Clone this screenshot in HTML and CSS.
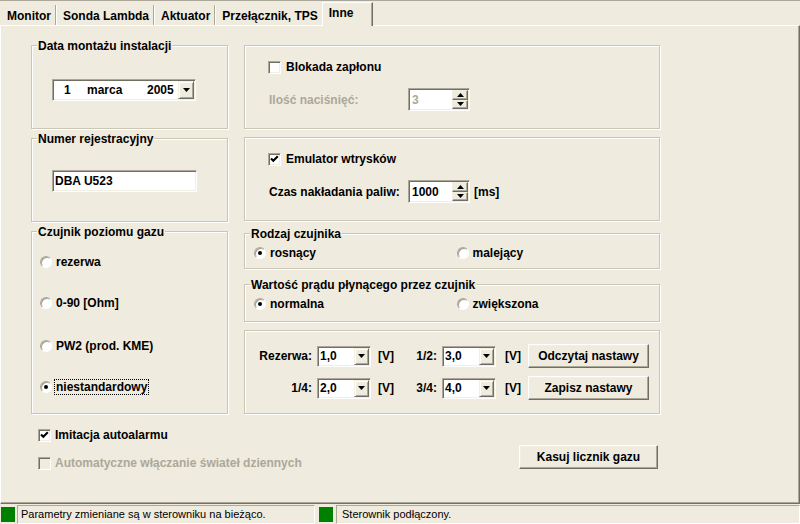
FILE: index.html
```html
<!DOCTYPE html>
<html lang="pl">
<head>
<meta charset="utf-8">
<title>Inne</title>
<link rel="stylesheet" href="styles.css">
</head>
<body>
<div class="tabs">
  <div class="tab">Monitor</div>
  <div class="tab">Sonda Lambda</div>
  <div class="tab">Aktuator</div>
  <div class="tab prev">Przełącznik, TPS</div>
  <div class="tab active">Inne</div>
</div>
<div class="panel">
  <div class="cols">
    <div class="col col-left">
      <div class="group g-date">
        <div class="cap">Data montażu instalacji</div>
        <div class="field date">
          <span class="d-day">1</span><span class="d-month">marca</span><span class="d-year">2005</span>
          <span class="ddbtn"><svg width="7" height="4" viewBox="0 0 7 4"><polygon points="0,0 7,0 3.5,4" fill="#000"/></svg></span>
        </div>
      </div>
      <div class="group g-reg">
        <div class="cap">Numer rejestracyjny</div>
        <div class="field text-in">DBA U523</div>
      </div>
      <div class="group g-gas">
        <div class="cap">Czujnik poziomu gazu</div>
        <div class="gopt go1"><span class="radio"></span><span class="lbl">rezerwa</span></div>
        <div class="gopt go2"><span class="radio"></span><span class="lbl">0-90 [Ohm]</span></div>
        <div class="gopt go3"><span class="radio"></span><span class="lbl">PW2 (prod. KME)</span></div>
        <div class="gopt go4"><span class="radio on"></span><span class="lbl focus">niestandardowy</span></div>
      </div>
    </div>
    <div class="col col-right">
      <div class="group b1">
        <div class="chkrow"><span class="check"></span><span class="lbl">Blokada zapłonu</span></div>
        <div class="spinrow">
          <span class="slbl dis">Ilość naciśnięć:</span>
          <div class="field spin"><span class="val dis">3</span>
            <span class="spinbtns">
              <span class="sb"><svg width="7" height="4" viewBox="0 0 7 4"><polygon points="0,4 7,4 3.5,0" fill="#000"/></svg></span>
              <span class="sb"><svg width="7" height="4" viewBox="0 0 7 4"><polygon points="0,0 7,0 3.5,4" fill="#000"/></svg></span>
            </span>
          </div>
        </div>
      </div>
      <div class="group b2">
        <div class="chkrow"><span class="check on"><svg width="11" height="11" viewBox="1 1 11 11"><polyline points="3,5.5 5.3,7.8 9.8,3.3" fill="none" stroke="#000" stroke-width="2.1"/></svg></span><span class="lbl">Emulator wtrysków</span></div>
        <div class="spinrow">
          <span class="slbl">Czas nakładania paliw:</span>
          <div class="field spin"><span class="val">1000</span>
            <span class="spinbtns">
              <span class="sb"><svg width="7" height="4" viewBox="0 0 7 4"><polygon points="0,4 7,4 3.5,0" fill="#000"/></svg></span>
              <span class="sb"><svg width="7" height="4" viewBox="0 0 7 4"><polygon points="0,0 7,0 3.5,4" fill="#000"/></svg></span>
            </span>
          </div>
          <span class="unit-ms">[ms]</span>
        </div>
      </div>
      <div class="group b3">
        <div class="cap">Rodzaj czujnika</div>
        <div class="ropts">
          <div class="ropt"><span class="radio on"></span><span class="lbl">rosnący</span></div>
          <div class="ropt"><span class="radio"></span><span class="lbl">malejący</span></div>
        </div>
      </div>
      <div class="group b4">
        <div class="cap">Wartość prądu płynącego przez czujnik</div>
        <div class="ropts">
          <div class="ropt"><span class="radio on"></span><span class="lbl">normalna</span></div>
          <div class="ropt"><span class="radio"></span><span class="lbl">zwiększona</span></div>
        </div>
      </div>
      <div class="group b5">
        <div class="vrow vr1">
          <span class="vl">Rezerwa:</span>
          <div class="field combo"><span class="cv">1,0</span><span class="ddbtn cbtn"><svg width="7" height="4" viewBox="0 0 7 4"><polygon points="0,0 7,0 3.5,4" fill="#000"/></svg></span></div>
          <span class="unit">[V]</span>
          <span class="vl2">1/2:</span>
          <div class="field combo"><span class="cv">3,0</span><span class="ddbtn cbtn"><svg width="7" height="4" viewBox="0 0 7 4"><polygon points="0,0 7,0 3.5,4" fill="#000"/></svg></span></div>
          <span class="unit2">[V]</span>
          <span class="btn vbtn">Odczytaj nastawy</span>
        </div>
        <div class="vrow vr2">
          <span class="vl">1/4:</span>
          <div class="field combo"><span class="cv">2,0</span><span class="ddbtn cbtn"><svg width="7" height="4" viewBox="0 0 7 4"><polygon points="0,0 7,0 3.5,4" fill="#000"/></svg></span></div>
          <span class="unit">[V]</span>
          <span class="vl2">3/4:</span>
          <div class="field combo"><span class="cv">4,0</span><span class="ddbtn cbtn"><svg width="7" height="4" viewBox="0 0 7 4"><polygon points="0,0 7,0 3.5,4" fill="#000"/></svg></span></div>
          <span class="unit2">[V]</span>
          <span class="btn vbtn">Zapisz nastawy</span>
        </div>
      </div>
    </div>
  </div>
  <div class="bottom">
    <div class="bchecks">
      <div class="bchk"><span class="check on"><svg width="11" height="11" viewBox="1 1 11 11"><polyline points="3,5.5 5.3,7.8 9.8,3.3" fill="none" stroke="#000" stroke-width="2.1"/></svg></span><span class="lbl">Imitacja autoalarmu</span></div>
      <div class="bchk bchk2"><span class="check disabled"></span><span class="lbl dis">Automatyczne włączanie świateł dziennych</span></div>
    </div>
    <span class="btn kasuj">Kasuj licznik gazu</span>
  </div>
</div>
<div class="status">
  <span class="led"></span>
  <span class="sbox s1">Parametry zmieniane są w sterowniku na bieżąco.</span>
  <span class="led led2"></span>
  <span class="sbox s2">Sterownik podłączony.</span>
</div>
</body>
</html>
```

FILE: styles.css
```css
html, body {
  margin: 0;
  padding: 0;
}
body {
  width: 800px;
  height: 524px;
  overflow: hidden;
  background: #efebde;
  color: #000;
  font: bold 12px "Liberation Sans", Arial, sans-serif;
}

/* Tabs */
.tabs {
  display: flex;
  align-items: flex-end;
  height: 25px;
  box-sizing: border-box;
  border-top: 1px solid #aca899;
  padding-left: 1px;
}
.tab {
  height: 20px;
  box-sizing: border-box;
  padding: 4px 4px 0 6px;
  line-height: 14px;
  white-space: nowrap;
  border-right: 1px solid #aca899;
  box-shadow: 1px 0 0 #fff;
  margin-right: 1px;
}
.tab.prev {
  border-right: none;
  box-shadow: none;
  margin-right: 0;
}
.tab.active {
  position: relative;
  height: 24px;
  width: 51px;
  margin-bottom: -1px;
  padding: 3px 0 0 6px;
  background: #efebde;
  border-top: 1px solid #fff;
  border-left: 1px solid #fff;
  border-right: 1px solid #716f64;
  box-shadow: inset -1px 0 0 #aca899;
}

/* Panel */
.panel {
  width: 800px;
  height: 479px;
  box-sizing: border-box;
  border: 1px solid;
  border-color: #fff #716f64 #716f64 #fff;
  box-shadow: inset -1px -1px 0 #aca899;
  padding: 19px 0 0 30px;
}
.cols {
  display: flex;
}
.col {
  display: flex;
  flex-direction: column;
}
.col-left {
  width: 197px;
  margin-right: 16px;
}
.col-right {
  width: 416px;
}

.group {
  box-sizing: border-box;
  border: 1px solid #cac6b6;
  box-shadow: inset 1px 1px 0 #fff, 1px 1px 0 #fff;
}
.cap {
  display: table;
  margin: -7px 0 0 5px;
  padding: 0 1px;
  line-height: 14px;
  background: #efebde;
  white-space: nowrap;
}

.g-date { height: 84px; }
.g-reg { height: 84px; margin-top: 9px; }
.g-gas { height: 183px; margin-top: 9px; }
.b1 { height: 84px; }
.b2 { height: 84px; margin-top: 8px; }
.b3 { height: 36px; margin-top: 12px; }
.b4 { height: 38px; margin-top: 15px; }
.b5 { height: 84px; margin-top: 8px; }

/* Sunken fields */
.field {
  box-sizing: border-box;
  background: #fff;
  border: 1px solid;
  border-color: #aca899 #fff #fff #aca899;
  box-shadow: inset 1px 1px 0 #716f64, inset -1px -1px 0 #f1efe2;
  display: flex;
  align-items: center;
}

.date {
  width: 144px;
  height: 22px;
  margin: 26px 0 0 20px;
}
.d-day { margin-left: 11px; width: 23px; }
.d-month { width: 60px; }
.d-year { width: 29px; }

.ddbtn {
  width: 16px;
  height: 18px;
  margin-left: auto;
  margin-right: 1px;
  box-sizing: border-box;
  background: #efebde;
  border: 1px solid;
  border-color: #f1efe2 #716f64 #716f64 #f1efe2;
  box-shadow: inset 1px 1px 0 #fff, inset -1px -1px 0 #aca899;
  display: flex;
  align-items: center;
  justify-content: center;
}
.ddbtn svg { display: block; }

.text-in {
  width: 145px;
  height: 22px;
  margin: 24px 0 0 20px;
  padding-left: 2px;
}

/* Radios and checks */
.radio {
  flex: none;
  width: 12px;
  height: 12px;
  box-sizing: border-box;
  border-radius: 50%;
  background: #fff;
  border: 1px solid;
  border-color: #aca899 #fff #fff #aca899;
  box-shadow: inset 1px 1px 0 #a09d90;
  display: flex;
  align-items: center;
  justify-content: center;
}
.radio.on::after {
  content: "";
  width: 4px;
  height: 4px;
  border-radius: 50%;
  background: #000;
}
.check {
  flex: none;
  width: 13px;
  height: 13px;
  box-sizing: border-box;
  background: #fff;
  border: 1px solid;
  border-color: #aca899 #fff #fff #aca899;
  box-shadow: inset 1px 1px 0 #716f64, inset -1px -1px 0 #f1efe2;
}
.check svg { display: block; }
.check.disabled {
  background: #efebde;
}
.dis { color: #aca899; }
.lbl { line-height: 14px; white-space: nowrap; }

.gopt {
  display: flex;
  align-items: center;
  height: 14px;
  margin-left: 8px;
}
.gopt .lbl { margin-left: 4px; }
.go1 { margin-top: 16px; }
.go2 { margin-top: 27px; }
.go3 { margin-top: 29px; }
.go4 { margin-top: 27px; }
.gopt .focus {
  margin-left: 3px;
  padding: 0 1px;
  outline: 1px dotted #000;
  outline-offset: 0;
}

.chkrow {
  display: flex;
  align-items: center;
  height: 14px;
  margin: 14px 0 0 23px;
}
.chkrow .lbl { margin-left: 5px; }

.spinrow {
  display: flex;
  align-items: center;
  height: 23px;
  margin: 14px 0 0 24px;
}
.slbl {
  width: 139px;
  white-space: nowrap;
}
.spin {
  width: 62px;
  height: 23px;
}
.spin .val { margin-left: 3px; }
.spinbtns {
  margin-left: auto;
  margin-right: 1px;
  width: 16px;
  height: 19px;
  display: flex;
  flex-direction: column;
}
.sb {
  flex: 1;
  box-sizing: border-box;
  background: #efebde;
  border: 1px solid;
  border-color: #f1efe2 #716f64 #716f64 #f1efe2;
  box-shadow: inset -1px -1px 0 #aca899;
  display: flex;
  align-items: center;
  justify-content: center;
}
.sb svg { display: block; width: 7px; height: 4px; }
.unit-ms { margin-left: 4px; }

.ropts {
  display: flex;
  height: 14px;
  margin-left: 9px;
}
.b3 .ropts { margin-top: 5px; }
.b4 .ropts { margin-top: 5px; }
.ropt {
  display: flex;
  align-items: center;
  width: 203px;
}
.ropt .lbl { margin-left: 4px; }

/* Voltage rows */
.vrow {
  display: flex;
  align-items: center;
  height: 24px;
}
.vr1 { margin-top: 13px; }
.vr2 { margin-top: 8px; }
.vl { width: 67px; text-align: right; }
.vl2 { width: 39px; text-align: right; }
.combo {
  width: 54px;
  height: 21px;
  margin-left: 5px;
}
.cv { margin-left: 2px; }
.cbtn { width: 15px; height: 17px; }
.unit { margin-left: 7px; width: 20px; }
.unit2 { margin-left: 9px; width: 17px; }

.btn {
  box-sizing: border-box;
  height: 24px;
  display: flex;
  align-items: center;
  justify-content: center;
  white-space: nowrap;
  background: #efebde;
  border: 1px solid;
  border-color: #fff #716f64 #716f64 #fff;
  box-shadow: inset -1px -1px 0 #aca899, inset 1px 1px 0 #f1efe2;
}
.vbtn {
  width: 121px;
  margin-left: 6px;
}

/* Bottom */
.bottom {
  display: flex;
  align-items: flex-start;
  width: 629px;
}
.bchecks {
  padding: 14px 0 0 7px;
}
.bchk {
  display: flex;
  align-items: center;
  height: 14px;
}
.bchk .lbl { margin-left: 4px; }
.bchk2 { margin-top: 14px; }
.kasuj {
  width: 139px;
  margin: 31px 2px 0 auto;
}

/* Status bar */
.status {
  display: flex;
  height: 19px;
  margin-top: 1px;
  font-weight: normal;
  font-size: 11px;
}
.led {
  flex: none;
  width: 14px;
  height: 15px;
  margin: 2px 2px 0 1px;
  background: #008000;
}
.led2 { margin: 2px 3px 0 4px; }
.sbox {
  box-sizing: border-box;
  height: 19px;
  line-height: 17px;
  border: 1px solid;
  border-color: #aca899 #fff #fff #aca899;
  padding-left: 3px;
  white-space: nowrap;
}
.s1 { width: 298px; }
.s2 { flex: 1; padding-left: 5px; }
```
